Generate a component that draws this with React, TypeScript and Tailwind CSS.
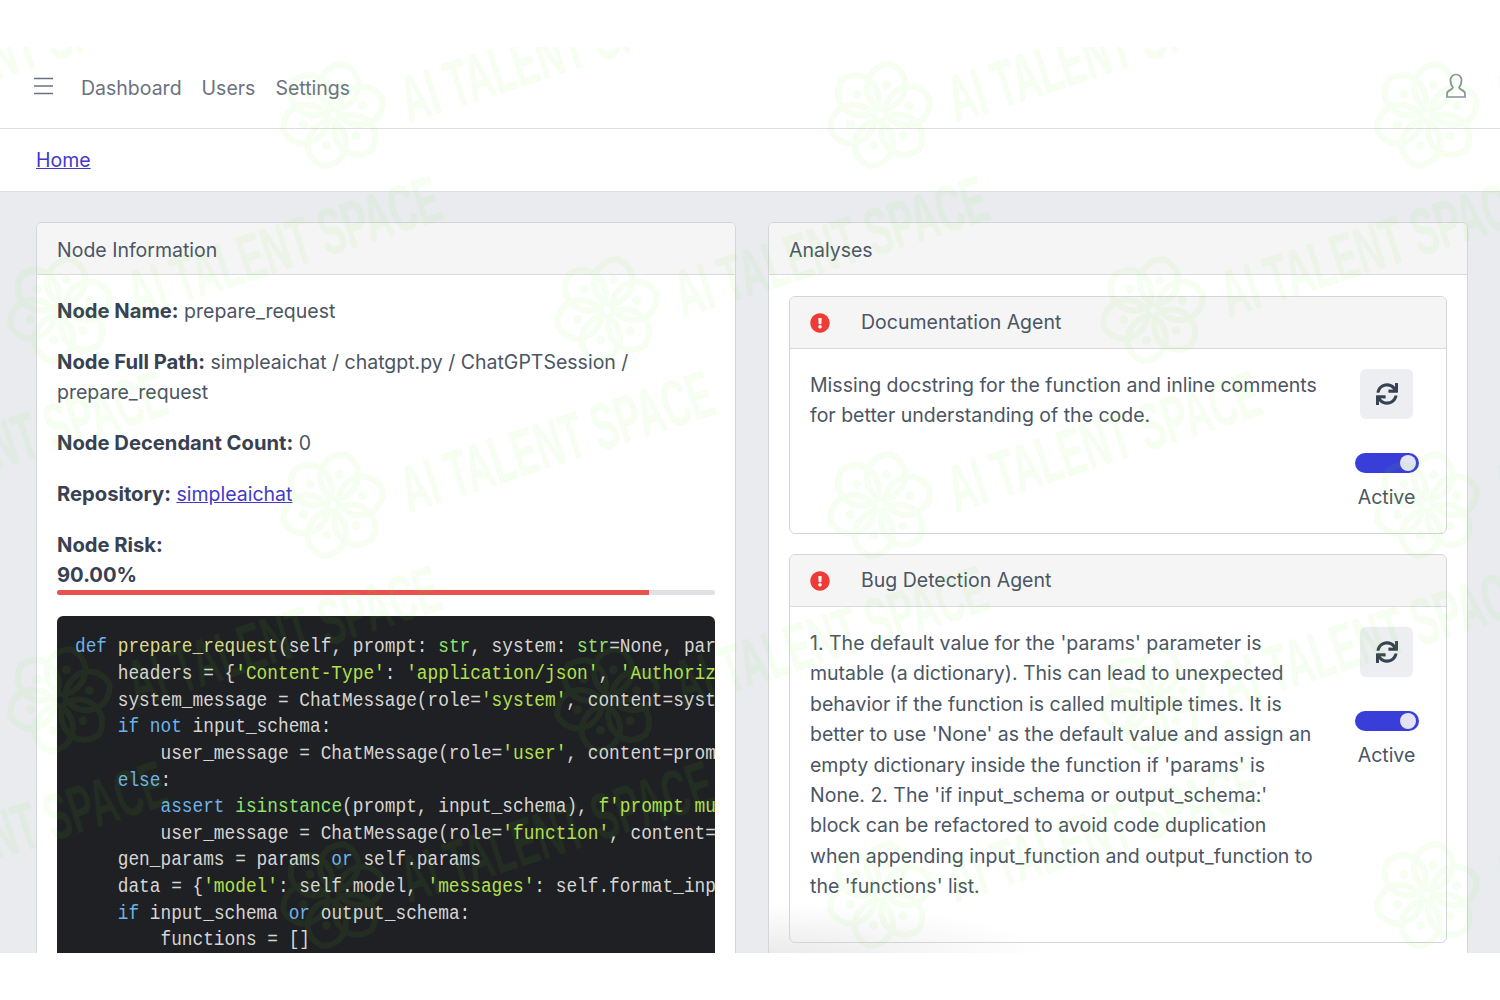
import { FaExclamationCircle, FaSync } from "react-icons/fa";

type Token = { t: string; c?: string };

const KW = "text-[#6db3e8]";
const FN = "text-[#dbd98f]";
const STR = "text-[#b4e04f]";
const BI = "text-[#8fe36f]";

const k = (t: string) => ({ t, c: KW });
const s = (t: string) => ({ t, c: STR });
const b = (t: string) => ({ t, c: BI });
const p = (t: string) => ({ t });

const codeLines: Token[][] = [
  [k("def"), p(" "), { t: "prepare_request", c: FN }, p("(self, prompt: "), b("str"), p(", system: "), b("str"), p("=None, params: dict = {}):")],
  [p("    headers = {"), s("'Content-Type'"), p(": "), s("'application/json'"), p(", "), s("'Authorization'"), p(": f'Bearer'}")],
  [p("    system_message = ChatMessage(role="), s("'system'"), p(", content=system)")],
  [p("    "), k("if"), p(" "), k("not"), p(" input_schema:")],
  [p("        user_message = ChatMessage(role="), s("'user'"), p(", content=prompt)")],
  [p("    "), k("else"), p(":")],
  [p("        "), k("assert"), p(" "), b("isinstance"), p("(prompt, input_schema), "), s("f'prompt must be'")],
  [p("        user_message = ChatMessage(role="), s("'function'"), p(", content=prompt)")],
  [p("    gen_params = params "), k("or"), p(" self.params")],
  [p("    data = {"), s("'model'"), p(": self.model, "), s("'messages'"), p(": self.format_input(prompt)}")],
  [p("    "), k("if"), p(" input_schema "), k("or"), p(" output_schema:")],
  [p("        functions = []")],
];

const marks: [number, number][] = [];
[115, 310, 505, 700, 895].forEach((y, row) => {
  const xs = row % 2 === 0 ? [-214, 333, 880, 1427] : [60, 607, 1153];
  xs.forEach((x) => marks.push([x, y]));
});

const petals = [0, 60, 120, 180, 240, 300];

const Watermark = () => (
  <div className="absolute left-0 top-[47px] h-[906px] w-[1500px] overflow-hidden pointer-events-none">
    <svg width="1500" height="906" viewBox="0 47 1500 906">
      <g opacity="0.07" fill="#64e81e">
        {marks.map(([x, y]) => (
          <g key={`${x}-${y}`} transform={`translate(${x} ${y})`}>
            {petals.map((a) => (
              <g key={a} transform={`rotate(${a + 12})`}>
                <path
                  d="M-2 -6 C-24 -14 -26 -46 0 -52 C26 -46 24 -14 2 -6"
                  fill="none"
                  stroke="#64e81e"
                  strokeWidth="6"
                  strokeLinecap="round"
                />
                <circle cx="0" cy="-31" r="4.5" />
              </g>
            ))}
            <text
              transform="translate(76 8) rotate(-17.8) scale(0.56 1)"
              fontFamily="Liberation Sans, sans-serif"
              fontWeight="700"
              fontSize="66"
            >
              AI TALENT SPACE
            </text>
          </g>
        ))}
      </g>
    </svg>
  </div>
);

const CardHeader = ({ title }: { title: string }) => (
  <div className="h-[52px] flex items-center px-5 pt-[3px] bg-[#f5f5f6] border-b border-[#d8dade] rounded-t-[5px]">
    {title}
  </div>
);

const AgentCard = ({ name, text, className }: { name: string; text: string; className: string }) => (
  <div className={`border border-[#d2d5da] rounded-[6px] ${className}`}>
    <div className="h-[52px] flex items-center px-5 gap-[31px] bg-[#f5f5f6] border-b border-[#d8dade] rounded-t-[5px]">
      <FaExclamationCircle className="w-5 h-5 text-[#ef3b36] shrink-0" />
      <span>{name}</span>
    </div>
    <div className="flex pl-5 pr-[27px] pt-[20px]">
      <p className="w-[509px] shrink-0 pt-[1px]">{text}</p>
      <div className="ml-[36px] w-16 flex flex-col items-center">
        <button className="mr-[1px] w-[53px] h-[50px] rounded-[6px] bg-[#eceef1] flex items-center justify-center text-[#374151]">
          <FaSync className="w-[22px] h-[22px]" />
        </button>
        <div className="mt-[34px] w-16 h-5 rounded-full bg-[#3a3ed8] relative">
          <span className="absolute right-[3px] top-[2px] w-4 h-4 rounded-full bg-[#e3e3f5]" />
        </div>
        <span className="mt-[9px] mr-[1px]">Active</span>
      </div>
    </div>
  </div>
);

const Label = ({ children }: { children: string }) => (
  <span className="font-bold text-[#374151] text-[20.2px]">{children}</span>
);

export default function App() {
  return (
    <div
      className="relative h-[1000px] w-[1500px] overflow-hidden bg-white text-[#4b5563] text-[19.5px] leading-[30.4px]"
      style={{ fontFamily: "Inter, sans-serif" }}
    >
      <div className="h-[47px]" />
      <div className="h-[906px] flex flex-col overflow-hidden">
        <nav className="h-[82px] shrink-0 flex items-center justify-between pl-[34px] pr-[34px] border-b border-[#dcdee2]">
          <div className="flex items-center">
            <svg width="19" height="18" viewBox="0 0 19 18" fill="none" stroke="#6b7280" strokeWidth="1.6" className="mr-[28px] -mt-[3px]">
              <path d="M0 1.5h19M0 9h19M0 16.5h19" />
            </svg>
            <div className="flex gap-[20px] pt-[2px] text-[#6b7280]">
              <span>Dashboard</span>
              <span>Users</span>
              <span>Settings</span>
            </div>
          </div>
          <svg width="20" height="25" viewBox="0 0 20 25" fill="none" stroke="#8b919c" strokeWidth="1.7" className="-mt-[4px]">
            <path d="M1 24v-3.5c0-3.5 5.5-3.5 6-6C5 12.5 4.5 9.5 4.5 7a5.5 5.5 0 0 1 11 0c0 2.500-.5 5.500-2.500 7.500.5 2.500 6 2.500 6 6V24z" />
          </svg>
        </nav>

        <div className="h-[63px] shrink-0 flex items-center px-9 border-b border-[#dcdee2] bg-white">
          <a href="#" className="text-[#4338ca] underline">Home</a>
        </div>

        <main className="flex-1 bg-[#e9ebef] px-9 pt-[30px] overflow-hidden">
          <div className="grid grid-cols-[700px_700px] gap-8">
            <section className="border border-[#d2d5da] rounded-[6px] bg-white">
              <CardHeader title="Node Information" />
              <div className="px-5 pt-[21px]">
                <p className="mb-[20.6px]"><Label>Node Name:</Label> prepare_request</p>
                <p className="mb-[20.6px]"><Label>Node Full Path:</Label> simpleaichat / chatgpt.py / ChatGPTSession / prepare_request</p>
                <p className="mb-[20.6px]"><Label>Node Decendant Count:</Label> 0</p>
                <p className="mb-[20.6px]">
                  <Label>Repository:</Label> <a href="#" className="text-[#4338ca] underline">simpleaichat</a>
                </p>
                <p><Label>Node Risk:</Label></p>
                <p className="-mt-[1px]"><Label>90.00%</Label></p>
                <div className="h-[5px] rounded-full bg-[#dfe1e5]">
                  <div className="h-full w-[90%] rounded-l-full bg-[#e9514f]" />
                </div>
                <pre
                  className="mt-[21px] pt-[18px] pl-[18px] h-[400px] overflow-hidden rounded-t-[6px] bg-[#1e2023] text-[#d6d6d6] text-[20px] leading-[26.65px]"
                  style={{ fontFamily: "'Liberation Mono', monospace" }}
                >
                  <div className="origin-left scale-x-[0.89]">
                    {codeLines.map((line, i) => (
                      <div key={i}>
                        {line.map((tok, j) => (
                          <span key={j} className={tok.c}>{tok.t}</span>
                        ))}
                      </div>
                    ))}
                  </div>
                </pre>
              </div>
            </section>

            <section className="relative border border-[#d2d5da] rounded-[6px] bg-white h-[800px]">
              <CardHeader title="Analyses" />
              <div className="absolute left-0 top-[680px] w-[280px] h-[52px] bg-[radial-gradient(ellipse_at_bottom_left,#eaeaeb_0%,#ffffff_70%)]" />
              <div className="relative px-5 pt-[21px] flex flex-col gap-[20px]">
                <AgentCard
                  className="h-[238px] bg-white"
                  name="Documentation Agent"
                  text="Missing docstring for the function and inline comments for better understanding of the code."
                />
                <AgentCard
                  className="h-[389px]"
                  name="Bug Detection Agent"
                  text="1. The default value for the 'params' parameter is mutable (a dictionary). This can lead to unexpected behavior if the function is called multiple times. It is better to use 'None' as the default value and assign an empty dictionary inside the function if 'params' is None. 2. The 'if input_schema or output_schema:' block can be refactored to avoid code duplication when appending input_function and output_function to the 'functions' list."
                />
              </div>
            </section>
          </div>
        </main>
      </div>
      <Watermark />
    </div>
  );
}
